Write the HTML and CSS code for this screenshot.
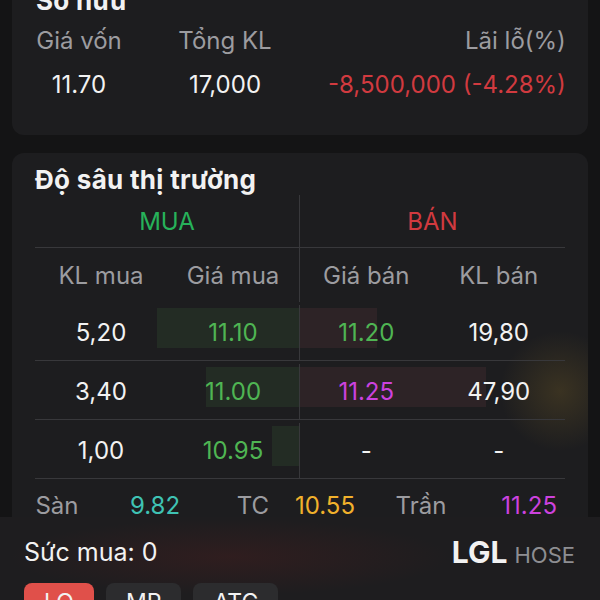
FILE: index.html
```html
<!DOCTYPE html>
<html lang="vi">
<head>
    <meta charset="UTF-8">
    <meta name="viewport" content="width=device-width, initial-scale=1.0">
    <title>LGL - Đặt lệnh</title>
    <link rel="stylesheet" href="styles.css">
</head>
<body>
    <div class="page">
        <section class="card holding">
            <h2 class="card-title">Sở hữu</h2>
            <div class="holding-grid">
                <span class="label">Giá vốn</span>
                <span class="label">Tổng KL</span>
                <span class="label right">Lãi lỗ(%)</span>
                <span class="value">11.70</span>
                <span class="value">17,000</span>
                <span class="value right loss">-8,500,000 (-4.28%)</span>
            </div>
        </section>

        <section class="card depth">
            <h2 class="card-title">Độ sâu thị trường</h2>
            <div class="book">
                <div class="book-row book-head">
                    <div class="side buy"><span class="side-name">MUA</span></div>
                    <div class="side sell"><span class="side-name">BÁN</span></div>
                </div>
                <div class="book-row book-cols">
                    <div class="side buy"><span>KL mua</span><span>Giá mua</span></div>
                    <div class="side sell"><span>Giá bán</span><span>KL bán</span></div>
                </div>
                <div class="book-row level">
                    <div class="side buy">
                        <div class="bar" style="width: 142px"></div>
                        <span class="vol">5,20</span><span class="price up">11.10</span>
                    </div>
                    <div class="side sell">
                        <div class="bar" style="width: 77px"></div>
                        <span class="price up">11.20</span><span class="vol">19,80</span>
                    </div>
                </div>
                <div class="book-row level">
                    <div class="side buy">
                        <div class="bar" style="width: 93px"></div>
                        <span class="vol">3,40</span><span class="price up">11.00</span>
                    </div>
                    <div class="side sell">
                        <div class="bar" style="width: 186px"></div>
                        <span class="price ceil">11.25</span><span class="vol">47,90</span>
                    </div>
                </div>
                <div class="book-row level">
                    <div class="side buy">
                        <div class="bar" style="width: 27px"></div>
                        <span class="vol">1,00</span><span class="price up">10.95</span>
                    </div>
                    <div class="side sell">
                        <span class="vol">-</span><span class="vol">-</span>
                    </div>
                </div>
            </div>
            <div class="limits">
                <span class="label">Sàn</span>
                <span class="floor">9.82</span>
                <span class="label">TC</span>
                <span class="ref">10.55</span>
                <span class="label">Trần</span>
                <span class="ceil right">11.25</span>
            </div>
        </section>
    </div>

    <div class="order-panel">
        <div class="panel-top">
            <span class="power">Sức mua: 0</span>
            <span class="ticker">LGL <small>HOSE</small></span>
        </div>
        <div class="order-types">
            <button class="type active">LO</button>
            <button class="type">MP</button>
            <button class="type">ATC</button>
        </div>
    </div>
</body>
</html>
```

FILE: styles.css
```css
* {
    margin: 0;
    padding: 0;
    box-sizing: border-box;
}
body {
    font-family: 'Inter', 'Noto Sans', sans-serif;
    background: #141415;
    color: #f2f2f2;
    height: 600px;
    overflow: hidden;
    font-size: 24px;
}
.page {
    padding: 0 12px;
    margin-top: -30px;
}
.card {
    background: #1d1d1f;
    border-radius: 12px;
    padding: 16px 26px 35px 24px;
}
.card-title {
    font-size: 26px;
    font-weight: 700;
    line-height: 30px;
    letter-spacing: 0.3px;
}
.label {
    color: #9c9ca0;
}
.right {
    text-align: right;
}

/* so huu */
.holding-grid {
    display: grid;
    grid-template-columns: 86px 206px 1fr;
    grid-template-rows: 30px 30px;
    row-gap: 14px;
    margin-top: 10px;
    line-height: 30px;
}
.holding-grid span {
    text-align: center;
    white-space: nowrap;
}
.holding-grid .right {
    text-align: right;
}
.loss {
    color: #d13a3f;
}

/* do sau thi truong */
.depth {
    margin-top: 18px;
    padding: 12px 23px 0 23px;
    background:
        radial-gradient(circle at 548px 238px, rgba(125, 100, 40, 0.3), transparent 60px),
        #1d1d1f;
    border-radius: 12px 12px 0 0;
}
.book-row {
    display: flex;
}
.side {
    width: 50%;
    display: grid;
    grid-template-columns: 1fr 1fr;
    align-items: center;
    text-align: center;
    position: relative;
}
.side.buy {
    border-right: 1px solid #38383b;
}
.book-head {
    height: 53px;
    border-bottom: 1px solid #38383b;
}
.side-name {
    grid-column: 1 / 3;
}
.buy .side-name {
    color: #27b25a;
}
.sell .side-name {
    color: #d13a3f;
}
.book-cols {
    height: 54px;
    color: #9c9ca0;
}
.level {
    height: 59px;
    border-bottom: 1px solid #38383b;
    padding-top: 3px;
}
.level span {
    position: relative;
}
.bar {
    position: absolute;
    top: 3px;
    height: 40px;
}
.buy .bar {
    right: 0;
    background: #232c24;
}
.sell .bar {
    left: 0;
    background: #2d2326;
}
.price.up {
    color: #4fb553;
}
.ceil {
    color: #cc42de;
}
.floor {
    color: #3fc3b4;
}
.ref {
    color: #f1b12c;
}

.limits {
    display: grid;
    grid-template-columns: 44px 152px 44px 100px 92px 98px;
    text-align: center;
    padding-top: 15px;
    line-height: 23px;
    height: 38px;
}
.limits .right {
    padding-right: 8px;
}

/* dat lenh */
.order-panel {
    background:
        radial-gradient(ellipse at 230px 40px, rgba(80, 30, 30, 0.35), transparent 220px),
        #1e1d1f;
    padding: 20px 25px 0 24px;
}
.panel-top {
    display: flex;
    justify-content: space-between;
    align-items: center;
    height: 30px;
}
.power {
    font-size: 25px;
}
.ticker {
    font-size: 30px;
    font-weight: 700;
}
.ticker small {
    font-size: 22px;
    font-weight: 400;
    color: #8e8e92;
}
.order-types {
    display: flex;
    gap: 12px;
    margin-top: 16px;
}
.type {
    font-family: inherit;
    font-size: 23px;
    color: #f2f2f2;
    background: #2c2c2e;
    border: none;
    border-radius: 8px;
    height: 38px;
    padding: 0 20px;
}
.type.active {
    background: #e0504a;
}
```
